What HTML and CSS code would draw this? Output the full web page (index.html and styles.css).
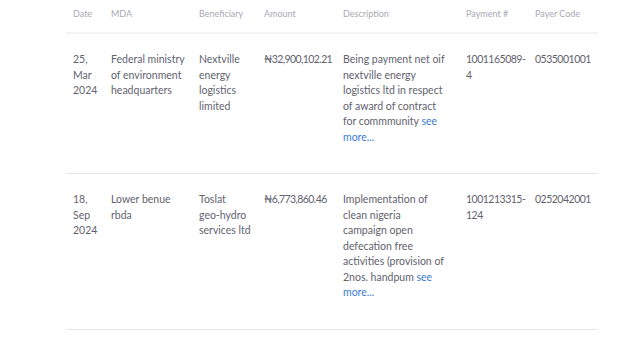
FILE: index.html
```html
<!DOCTYPE html>
<html>
<head>
<meta charset="utf-8">
<link rel="stylesheet" href="styles.css">
</head>
<body>
<div class="wrap">
<table class="tbl">
  <colgroup>
    <col class="c-date"><col class="c-mda"><col class="c-ben"><col class="c-amt"><col class="c-desc"><col class="c-pay"><col class="c-code">
  </colgroup>
  <thead>
    <tr><th>Date</th><th>MDA</th><th>Beneficiary</th><th>Amount</th><th>Description</th><th>Payment #</th><th>Payer Code</th></tr>
  </thead>
  <tbody>
    <tr>
      <td>25,<br>Mar<br>2024</td>
      <td>Federal ministry of environment headquarters</td>
      <td>Nextville energy logistics limited</td>
      <td class="num amt">₦32,900,102.21</td>
      <td class="desc">Being payment net oif nextville energy logistics ltd in respect of award of contract for commmunity <a class="more">see more...</a></td>
      <td class="num">1001165089-<br>4</td>
      <td class="num">0535001001</td>
    </tr>
    <tr>
      <td>18,<br>Sep<br>2024</td>
      <td>Lower benue rbda</td>
      <td>Toslat <span class="nw">geo-hydro</span> services ltd</td>
      <td class="num amt">₦6,773,860.46</td>
      <td class="desc">Implementation of clean nigeria campaign open defecation free activities (provision of 2nos. handpum <a class="more">see more...</a></td>
      <td class="num">1001213315-<br>124</td>
      <td class="num">0252042001</td>
    </tr>
  </tbody>
</table>
</div>
</body>
</html>
```
FILE: styles.css
```css
html, body { margin: 0; padding: 0; background: #fff; }
body { font-family: Lato, "Noto Sans", sans-serif; }
.wrap { padding: 0 42px 0 66px; }
.tbl { width: 532px; border-collapse: collapse; table-layout: fixed; }
.c-date { width: 38px; }
.c-mda { width: 88px; }
.c-ben { width: 65px; }
.c-amt { width: 79px; }
.c-desc { width: 123px; }
.c-pay { width: 69px; }
.c-code { width: 70px; }
.tbl th {
  text-align: left; font-weight: 400; font-size: 9px; color: #a9a9b2;
  padding: 8px 0 12px 7px; line-height: 12px;
  border-bottom: 2px solid #f3f3f5;
}
.tbl td {
  vertical-align: top; font-size: 10.5px; line-height: 15.5px; color: #62626e;
  padding: 18px 0 28px 7px; border-bottom: 1px solid #e6e6ea;
}
.tbl td.desc { padding-right: 12.5px; }
.tbl td.num { letter-spacing: -0.5px; }
.tbl td.amt { letter-spacing: -0.6px; }
.nw { white-space: nowrap; }
.more { color: #3a7bd5; }
```
